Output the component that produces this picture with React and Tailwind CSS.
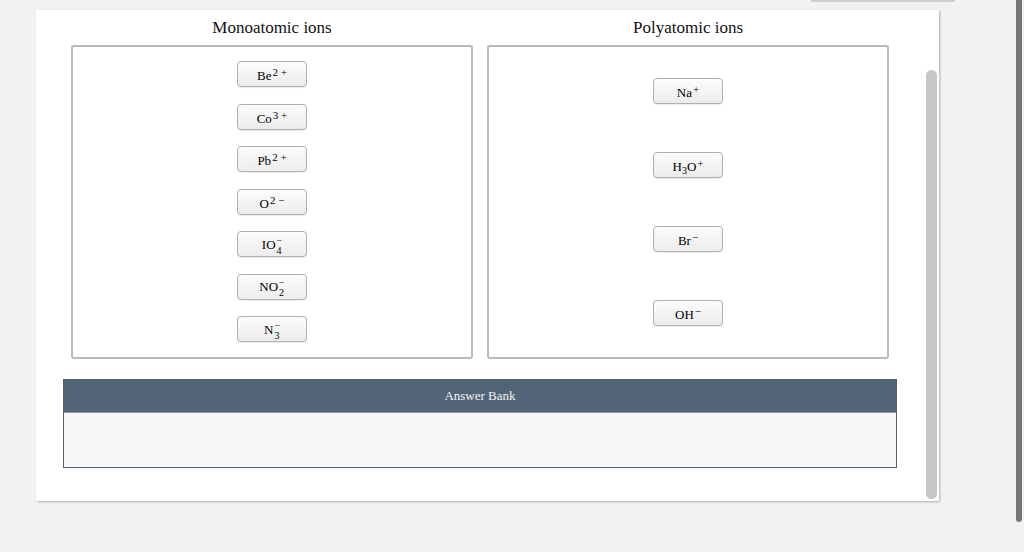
import React from 'react'

// ── Fichas de iones ─────────────────────────────────────────────────────────

function Carga({ sup, sub }) {
  if (sub) {
    return (
      <span className="inline-flex flex-col items-start align-middle leading-none ml-[1px] mt-[1px]">
        <span className="text-[10px] leading-[8px]">{sup}</span>
        <span className="text-[10px] leading-[11px]">{sub}</span>
      </span>
    )
  }
  return <span className="text-[11px] ml-[1px] relative -top-[4px]">{sup}</span>
}

function Ficha({ children }) {
  return (
    <div className="w-[70px] h-[26px] flex items-center justify-center rounded-[4px] border border-[#b0b0b0] bg-gradient-to-b from-[#fcfcfc] to-[#ececec] shadow-[0_1px_1px_rgba(0,0,0,0.08)] text-[13px] text-[#000] leading-none">
      <span className="pt-[3px]">{children}</span>
    </div>
  )
}

const MONOATOMICOS = [
  <>Be<Carga sup="2 +" /></>,
  <>Co<Carga sup="3 +" /></>,
  <>Pb<Carga sup="2 +" /></>,
  <>O<Carga sup="2 −" /></>,
  <>IO<Carga sup="−" sub="4" /></>,
  <>NO<Carga sup="−" sub="2" /></>,
  <>N<Carga sup="−" sub="3" /></>,
]

const POLIATOMICOS = [
  <>Na<Carga sup="+" /></>,
  <>H<span className="text-[10px] relative top-[3px]">3</span>O<Carga sup="+" /></>,
  <>Br<Carga sup="−" /></>,
  <>OH<Carga sup="−" /></>,
]

export default function App() {
  return (
    <div
      className="relative w-[1024px] h-[552px] overflow-hidden bg-[#f2f2f2]"
      style={{ fontFamily: '"Liberation Serif", "Times New Roman", serif' }}
    >
      {/* barra gris arriba a la derecha */}
      <div className="absolute left-[811px] top-0 w-[144px] h-[2px] bg-[#cfcfcf]" />
      {/* scrollbar de la ventana */}
      <div className="absolute left-[1016px] top-0 w-[6px] h-[522px] bg-[#777] rounded-b-full" />

      <div className="relative ml-[36px] mt-[10px] w-[903px] h-[491px] bg-white shadow-[1px_1px_2px_rgba(0,0,0,0.28)]">
        {/* scrollbar interno */}
        <div className="absolute left-[890px] top-[60px] w-[11px] h-[429px] rounded-full bg-[#c6c6c6]" />

        <div className="pl-[35px] pr-[50px] pt-[8px]">
          <div className="grid grid-cols-2 gap-x-[14px]">
            <h2 className="text-center text-[17px] leading-[20px] text-[#111] mb-[7px]">Monoatomic ions</h2>
            <h2 className="text-center text-[17px] leading-[20px] text-[#111] mb-[7px]">Polyatomic ions</h2>

            <div className="h-[314px] border-2 border-[#b9b9b9] rounded-[3px] flex flex-col items-center justify-between pt-[14px] pb-[15px]">
              {MONOATOMICOS.map((ion, i) => (
                <Ficha key={i}>{ion}</Ficha>
              ))}
            </div>

            <div className="h-[314px] border-2 border-[#b9b9b9] rounded-[3px] flex flex-col items-center justify-between py-[31px]">
              {POLIATOMICOS.map((ion, i) => (
                <Ficha key={i}>{ion}</Ficha>
              ))}
            </div>
          </div>
        </div>

        {/* Answer Bank */}
        <div className="ml-[27px] mt-[20px] w-[834px]">
          <div className="h-[33px] bg-[#536479] flex items-center justify-center text-[13px] text-[#f2f2f2]">
            Answer Bank
          </div>
          <div className="h-[56px] bg-[#f7f7f7] border border-t-[#8d99a7] border-[#536479]" />
        </div>
      </div>
    </div>
  )
}
